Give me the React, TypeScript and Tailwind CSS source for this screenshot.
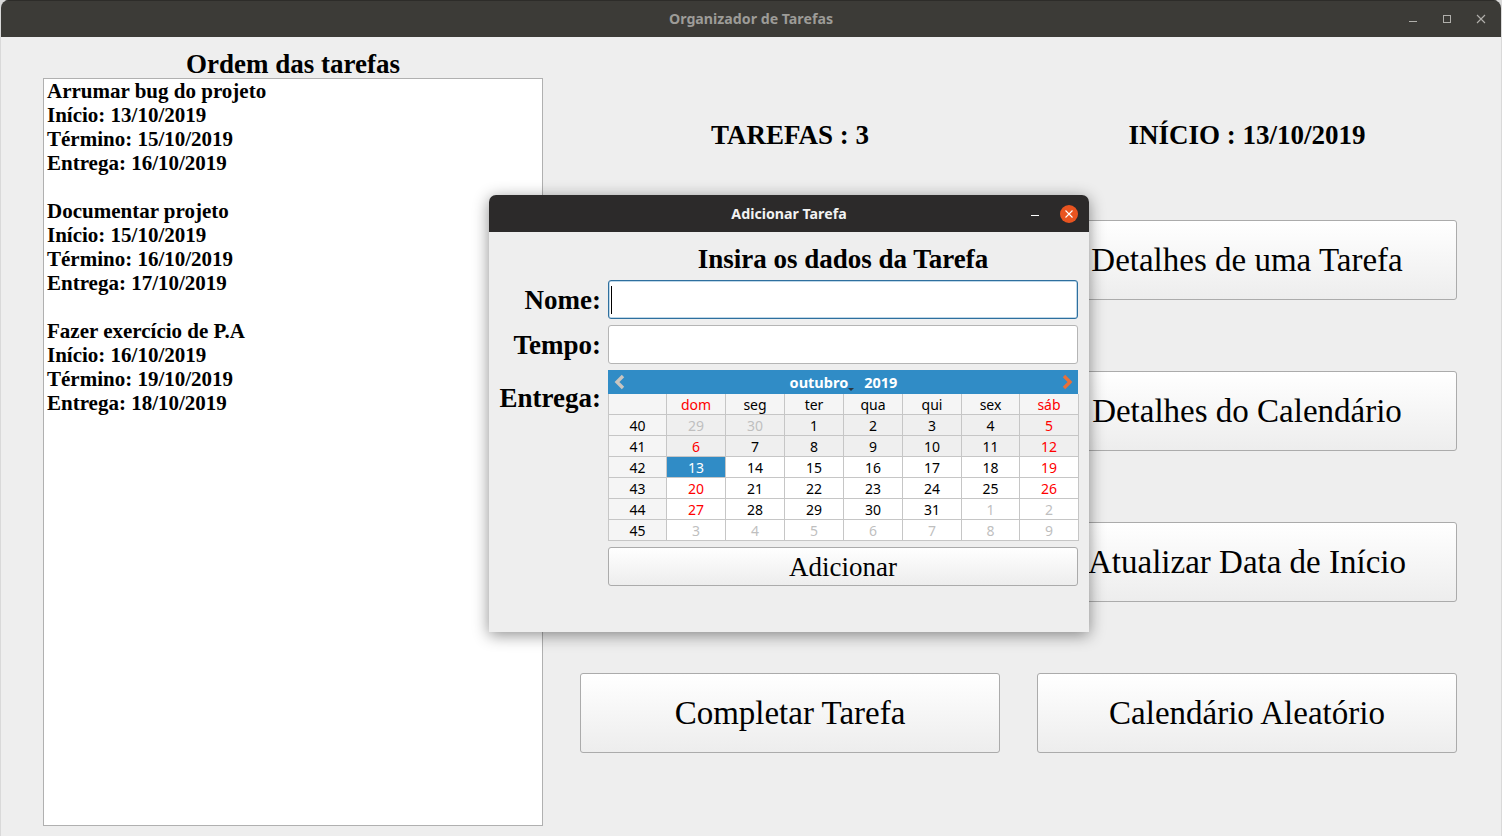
const serif = "font-['Liberation_Serif',serif]";
const ui = "font-['Noto_Sans',sans-serif]";

const tasks = [
  ["Arrumar bug do projeto", "Início: 13/10/2019", "Término: 15/10/2019", "Entrega: 16/10/2019"],
  ["Documentar projeto", "Início: 15/10/2019", "Término: 16/10/2019", "Entrega: 17/10/2019"],
  ["Fazer exercício de P.A", "Início: 16/10/2019", "Término: 19/10/2019", "Entrega: 18/10/2019"],
];

const weeks: [number, number[]][] = [
  [40, [29, 30, 1, 2, 3, 4, 5]],
  [41, [6, 7, 8, 9, 10, 11, 12]],
  [42, [13, 14, 15, 16, 17, 18, 19]],
  [43, [20, 21, 22, 23, 24, 25, 26]],
  [44, [27, 28, 29, 30, 31, 1, 2]],
  [45, [3, 4, 5, 6, 7, 8, 9]],
];
const heads = ["dom", "seg", "ter", "qua", "qui", "sex", "sáb"];

function MainButton({ label }: { label: string }) {
  return (
    <button className="h-20 w-[420px] rounded-[3px] border border-[#ababab] bg-gradient-to-b from-white to-[#ededed] text-[33px] leading-none text-black">
      {label}
    </button>
  );
}

function Calendar() {
  return (
    <div className={`w-[470px] ${ui} text-[14px]`}>
      <div className="flex h-6 items-center justify-between bg-[#308cc6] pl-[6px] pr-[5px]">
        <svg width="12" height="16" viewBox="0 0 12 16" fill="none">
          <path d="M9 2 L3 8 L9 14" stroke="#c9c5c0" strokeWidth="3.4" />
        </svg>
        <div className="relative flex gap-[16px] text-[14.5px] font-bold leading-none text-white">
          <span>outubro</span>
          <span>2019</span>
          <span className="absolute left-[58px] top-[13px] h-0 w-0 border-x-[3px] border-t-[3px] border-x-transparent border-t-[#2a3540]" />
        </div>
        <svg width="12" height="16" viewBox="0 0 12 16" fill="none">
          <path d="M3 2 L9 8 L3 14" stroke="#e8703a" strokeWidth="3.4" />
        </svg>
      </div>
      <div className="grid grid-cols-[58px_59px_59px_59px_59px_59px_58px_59px] border-l border-[#c6c6c6] leading-none">
        <div className="h-[21px] border-r border-b border-[#c6c6c6] bg-[#f5f5f5]" />
        {heads.map((h, i) => (
          <div
            key={h}
            className={`flex h-[21px] items-center justify-center border-r border-b border-[#c6c6c6] bg-[#f5f5f5] pt-[2px] ${i === 0 || i === 6 ? "text-[#ff0000]" : "text-black"}`}
          >
            {h}
          </div>
        ))}
        {weeks.map(([w, days], r) => (
          <div key={w} className="contents">
            <div className="flex h-[21px] items-center justify-center border-r border-b border-[#c6c6c6] bg-[#f5f5f5] pt-[2px] text-black">
              {w}
            </div>
            {days.map((d, i) => {
              const other = (r === 0 && i < 2) || r === 5 || (r === 4 && i > 4);
              const selected = r === 2 && i === 0;
              const weekend = i === 0 || i === 6;
              const color = selected
                ? "bg-[#308cc6] text-white"
                : `${r < 2 ? "bg-[#efefef]" : "bg-white"} ${other ? "text-[#bfbfbf]" : weekend ? "text-[#ff0000]" : "text-black"}`;
              return (
                <div
                  key={i}
                  className={`flex h-[21px] items-center justify-center border-r border-b border-[#c6c6c6] pt-[2px] ${color}`}
                >
                  {d}
                </div>
              );
            })}
          </div>
        ))}
      </div>
    </div>
  );
}

function Dialog() {
  return (
    <div className="absolute left-[489px] top-[195px] h-[437px] w-[600px] overflow-hidden rounded-t-[7px] bg-[#eeeeee] shadow-[0_3px_16px_rgba(0,0,0,0.45)]">
      <div className={`relative flex h-[37px] items-center justify-center bg-[#2c2a2a] ${ui} text-[14.2px] font-bold text-[#f2f2f2]`}>
        Adicionar Tarefa
        <span className="absolute left-[542px] top-[20px] h-px w-[8px] bg-white" />
        <span className="absolute left-[571px] top-[10px] flex h-[18px] w-[18px] items-center justify-center rounded-full bg-[#e95420]">
          <svg width="10" height="10" viewBox="0 0 10 10">
            <path d="M1.5 1.5 L8.5 8.5 M8.5 1.5 L1.5 8.5" stroke="white" strokeWidth="1.1" />
          </svg>
        </span>
      </div>
      <div className={`${serif} text-black`}>
        <div className="ml-[119px] w-[470px] pt-[11px] text-center text-[27px] font-bold leading-[32px]">
          Insira os dados da Tarefa
        </div>
        <div className="mt-[5px] flex">
          <div className="w-[112px] pt-[2px] text-right text-[27px] font-bold leading-[36px]">Nome:</div>
          <div className="relative ml-[7px] h-[39px] w-[470px] rounded-[3px] border border-[#2e6f9e] bg-white shadow-[inset_0_0_0_0.5px_#7fb0d2]">
            <span className="absolute left-[2px] top-[5px] h-[28px] w-px bg-black" />
          </div>
        </div>
        <div className="mt-[6px] flex">
          <div className="w-[112px] pt-[2px] text-right text-[27px] font-bold leading-[36px]">Tempo:</div>
          <div className="ml-[7px] h-[39px] w-[470px] rounded-[3px] border border-[#b5b5b5] bg-white" />
        </div>
        <div className="mt-[6px] flex">
          <div className="w-[112px] pt-[10px] text-right text-[27px] font-bold leading-[36px]">Entrega:</div>
          <div className="ml-[7px] w-[470px]">
            <Calendar />
            <button className="mt-[6px] h-[39px] w-[470px] rounded-[3px] border border-[#ababab] bg-gradient-to-b from-white to-[#ededed] pt-[2px] text-[27px] leading-none text-black">
              Adicionar
            </button>
          </div>
        </div>
      </div>
    </div>
  );
}

export default function App() {
  return (
    <div className="relative h-[836px] w-[1502px] overflow-hidden bg-[#d9d9d9]">
      <div className="ml-px mr-px flex h-[836px] flex-col overflow-hidden rounded-t-[8px] bg-[#eeeeee]">
        <div className={`relative flex h-[37px] shrink-0 items-center justify-center border-t border-[#2d2c29] bg-[#3c3b37] ${ui} text-[14.2px] font-bold text-[#9d9c98]`}>
          Organizador de Tarefas
          <span className="absolute left-[1408px] top-[20px] h-px w-[8px] bg-[#b0afab]" />
          <span className="absolute left-[1442px] top-[14px] h-[8px] w-[8px] border border-[#b0afab]" />
          <svg className="absolute left-[1475px] top-[13px]" width="10" height="10" viewBox="0 0 10 10">
            <path d="M1 1 L9 9 M9 1 L1 9" stroke="#b0afab" strokeWidth="1.1" />
          </svg>
        </div>
        <div className={`flex flex-1 ${serif} text-black`}>
          <div className="ml-[42px] flex w-[500px] flex-col">
            <div className="pt-[13px] text-center text-[27px] font-bold leading-[28px]">Ordem das tarefas</div>
            <div className="mb-[10px] h-[748px] border border-[#b0b0b0] bg-white pl-[3px] text-[21px] font-bold leading-[24px]">
              {tasks.map((t) => (
                <div key={t[0]} className="mb-[24px]">
                  {t.map((l) => (
                    <div key={l}>{l}</div>
                  ))}
                </div>
              ))}
            </div>
          </div>
          <div className="ml-[37px] flex w-[877px] flex-col">
            <div className="grid grid-cols-[420px_420px] gap-x-[37px] pt-[82px] text-center text-[27px] font-bold leading-[32px]">
              <div>TAREFAS : 3</div>
              <div>INÍCIO : 13/10/2019</div>
            </div>
            <div className="mt-[69px] grid grid-cols-[420px_420px] gap-x-[37px] gap-y-[71px]">
              <MainButton label="" />
              <MainButton label="Detalhes de uma Tarefa" />
              <MainButton label="" />
              <MainButton label="Detalhes do Calendário" />
              <MainButton label="" />
              <MainButton label="Atualizar Data de Início" />
              <MainButton label="Completar Tarefa" />
              <MainButton label="Calendário Aleatório" />
            </div>
          </div>
        </div>
      </div>
      <Dialog />
    </div>
  );
}
